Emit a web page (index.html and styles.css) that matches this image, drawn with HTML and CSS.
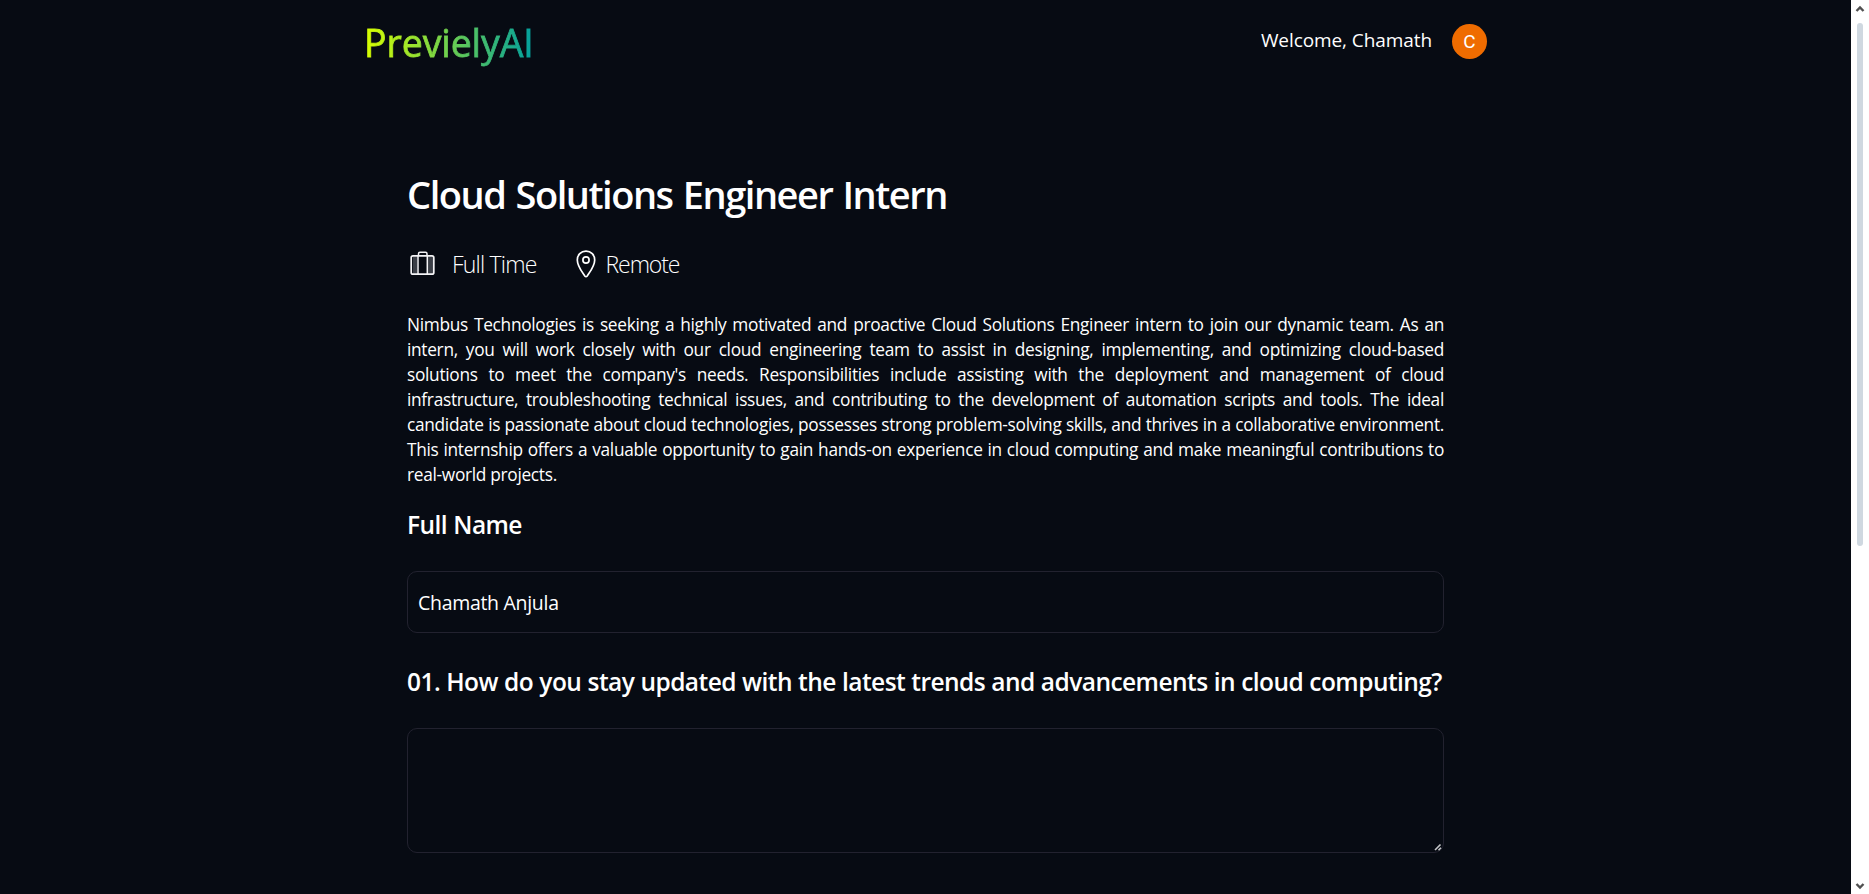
FILE: index.html
```html
<!DOCTYPE html>
<html lang="en">
<head>
<meta charset="utf-8">
<title>PrevielyAI</title>
<link rel="stylesheet" href="styles.css">
</head>
<body>
<div class="page">
  <header class="header">
    <div class="logo"><span>PrevielyAI</span></div>
    <div class="user"><span class="welcome">Welcome, Chamath</span><span class="avatar">C</span></div>
  </header>
  <main class="content">
    <h1 class="title">Cloud Solutions Engineer Intern</h1>
    <div class="meta">
      <svg class="icon-case" viewBox="0 0 26 26" fill="none" stroke="#f4f4f6"><path d="M3 5.500H7V23.500H3zM18 5.500h5v18h-5z" fill="#3b3f47" stroke="none"/><rect x="1.200" y="4.800" width="22.600" height="18.400" rx="1.800" stroke-width="1.700"/><path d="M8.500 5V2.700q0-1.500 1.500-1.500h5.500q1.500 0 1.500 1.500V5M8 5v18M17.300 5v18" stroke-width="1.500"/></svg>
      <span class="job">Full Time</span>
      <svg class="icon-pin" viewBox="0 0 20 28" fill="none" stroke="#fff" stroke-width="1.700"><path d="M10 1.200c-5 0-8.700 3.800-8.700 8.700C1.300 16 6.500 22.500 8.800 26q1.200 1.500 2.400 0C13.500 22.500 18.700 16 18.700 9.900c0-4.900-3.700-8.700-8.700-8.700z"/><circle cx="10" cy="10" r="3.100"/></svg>
      <span class="place">Remote</span>
    </div>
    <p class="desc">
      <span>Nimbus Technologies is seeking a highly motivated and proactive Cloud Solutions Engineer intern to join our dynamic team. As an</span>
      <span>intern, you will work closely with our cloud engineering team to assist in designing, implementing, and optimizing cloud-based</span>
      <span>solutions to meet the company's needs. Responsibilities include assisting with the deployment and management of cloud</span>
      <span>infrastructure, troubleshooting technical issues, and contributing to the development of automation scripts and tools. The ideal</span>
      <span>candidate is passionate about cloud technologies, possesses strong problem-solving skills, and thrives in a collaborative environment.</span>
      <span>This internship offers a valuable opportunity to gain hands-on experience in cloud computing and make meaningful contributions to</span>
      <span class="last">real-world projects.</span>
    </p>
    <h2 class="label">Full Name</h2>
    <div class="field">Chamath Anjula</div>
    <h2 class="label question">01. How do you stay updated with the latest trends and advancements in cloud computing?</h2>
    <div class="area"><svg class="grip" viewBox="0 0 8 8" stroke="#c4c6c8" stroke-width="1.600"><path d="M1 7L6.500 1.500M4.500 7.200L7 4.700"/></svg></div>
  </main>
</div>
<div class="scrollbar">
  <svg class="arrow" viewBox="0 0 10 8" fill="none" stroke="#505050" stroke-width="2.400"><path d="M1.500 6L5 2.500 8.500 6"/></svg>
  <div class="thumb"></div>
  <svg class="arrow down" viewBox="0 0 10 8" fill="none" stroke="#505050" stroke-width="2.400"><path d="M1.500 2L5 5.500 8.500 2"/></svg>
</div>
</body>
</html>
```
FILE: styles.css
```css
* { box-sizing: border-box; }
body {
  margin: 0;
  height: 894px;
  display: flex;
  overflow: hidden;
  background: #070b13;
  color: #fff;
  font-family: "Open Sans", "Noto Sans", sans-serif;
}
.page { flex: 1; height: 894px; overflow: hidden; }
.header {
  width: 1123px;
  height: 88px;
  margin: 0 auto;
  display: flex;
  justify-content: space-between;
}
.logo { font-size: 37.5px; line-height: 50px; padding-top: 18px; letter-spacing: -0.1px; }
.logo span {
  display: inline-block;
  background: linear-gradient(90deg, #d9ff00, #009f9f);
  -webkit-background-clip: text;
  background-clip: text;
  color: transparent;
  -webkit-text-stroke: 0.8px transparent;
}
.user { display: flex; align-items: flex-start; gap: 20px; padding-top: 24px; }
.welcome { font-size: 19px; line-height: 32px; letter-spacing: -0.08px; }
.avatar {
  width: 35px;
  height: 35px;
  border-radius: 50%;
  background: #ef6c00;
  font: 19px/36px Roboto, sans-serif;
  text-align: center;
}
.content { width: 1037px; margin: 0 auto; padding-top: 76px; }
.title { margin: 0; font-size: 38px; line-height: 60px; font-weight: 600; white-space: nowrap; letter-spacing: -1.45px; word-spacing: 1.6px; }
.meta { display: flex; align-items: center; height: 40px; margin-top: 20px; font-size: 23px; font-weight: 300; }
.icon-case { width: 26px; height: 26px; margin: 0 16px 0 3px; }
.job { letter-spacing: -0.8px; }
.icon-pin { width: 20px; height: 28px; margin: 0 10px 0 39px; }
.place { letter-spacing: -1.1px; }
.desc { margin: 28px 0 0; font-size: 17.3px; line-height: 25px; letter-spacing: -0.3px; }
.desc > span { display: block; white-space: nowrap; text-align-last: justify; }
.desc > .last { text-align-last: left; }
.label { margin: 18px 0 0; font-size: 24.5px; line-height: 40px; font-weight: 600; white-space: nowrap; letter-spacing: -0.55px; word-spacing: 0.35px; }
.field {
  height: 62px;
  margin-top: 26px;
  padding: 0 10px;
  border: 1px solid #22222f;
  border-radius: 10px;
  font-size: 19.5px;
  line-height: 62px;
  letter-spacing: -0.3px;
}
.question { margin-top: 29px; }
.area {
  height: 125px;
  margin-top: 26px;
  border: 1px solid #22222f;
  border-radius: 10px;
  position: relative;
}
.grip { position: absolute; right: 1px; bottom: 1px; width: 8px; height: 8px; }
.scrollbar {
  width: 18px;
  height: 894px;
  background: #fff;
  display: flex;
  flex-direction: column;
  align-items: center;
}
.arrow { width: 10px; height: 8px; margin-top: 5px; }
.thumb { width: 6px; height: 523px; margin-top: 10px; border-radius: 3px; background: #cfd8e0; }
.down { margin: auto 0 4px; }
```
